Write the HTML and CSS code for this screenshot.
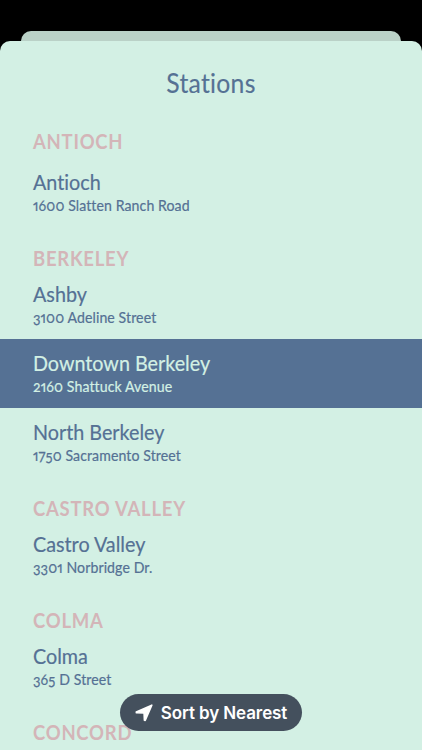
FILE: index.html
```html
<!DOCTYPE html>
<html lang="en">
<head>
  <meta charset="UTF-8" />
  <meta name="viewport" content="width=device-width, initial-scale=1.0"/>
  <title>Stations</title>
  <link rel="stylesheet" href="styles.css">
</head>
<body>

  <div class="back-card"></div>

  <main class="sheet">
    <h1 class="title">Stations</h1>

    <section class="group first">
      <h2>ANTIOCH</h2>
      <div class="station">
        <div class="name">Antioch</div>
        <div class="address">1600 Slatten Ranch Road</div>
      </div>
    </section>

    <section class="group">
      <h2>BERKELEY</h2>
      <div class="station">
        <div class="name">Ashby</div>
        <div class="address">3100 Adeline Street</div>
      </div>
      <div class="station selected">
        <div class="name">Downtown Berkeley</div>
        <div class="address">2160 Shattuck Avenue</div>
      </div>
      <div class="station">
        <div class="name">North Berkeley</div>
        <div class="address">1750 Sacramento Street</div>
      </div>
    </section>

    <section class="group">
      <h2>CASTRO VALLEY</h2>
      <div class="station">
        <div class="name">Castro Valley</div>
        <div class="address">3301 Norbridge Dr.</div>
      </div>
    </section>

    <section class="group">
      <h2>COLMA</h2>
      <div class="station">
        <div class="name">Colma</div>
        <div class="address">365 D Street</div>
      </div>
    </section>

    <section class="group">
      <h2>CONCORD</h2>
    </section>
  </main>

  <button class="sort-button">
    <svg width="18" height="18" viewBox="0 0 18 18"><path d="M16.8 1.2 L10.2 16.5 L9.4 16.3 L9.1 9.4 Q9 9 8.6 9 L1.4 8.8 L1.3 8.1 Z" fill="#fff" stroke="#fff" stroke-width="1.6" stroke-linejoin="round"/></svg>
    <span>Sort by Nearest</span>
  </button>

</body>
</html>
```

FILE: styles.css
```css
* {
  box-sizing: border-box;
}

body {
  margin: 0;
  height: 750px;
  padding-top: 31px;
  background: #000;
  font-family: Lato, "Open Sans", sans-serif;
  font-variant-ligatures: none;
  font-variant-numeric: oldstyle-nums proportional-nums;
  color: #557194;
  overflow: hidden;
}

.back-card {
  height: 10px;
  margin: 0 21px;
  border-radius: 10px 10px 0 0;
  background: #bad1c7;
}

.sheet {
  height: 709px;
  border-radius: 10px 10px 0 0;
  background: #d3f0e4;
  overflow: hidden;
}

.title {
  margin: 25px 0 12px;
  font-size: 26px;
  line-height: 34px;
  font-weight: 400;
  letter-spacing: 0.3px;
  text-align: center;
  transform: scaleX(0.95);
  -webkit-text-stroke: 0.15px;
}

.group h2 {
  margin: 0 33px;
  padding-top: 17px;
  height: 43px;
  font-size: 20px;
  line-height: 28px;
  letter-spacing: 0.8px;
  color: #d3b5b8;
  transform: scaleX(0.925);
  transform-origin: left;
}

.group.first h2 {
  padding-top: 15px;
  height: 46px;
}

.station {
  height: 69px;
  padding: 10px 33px 0;
}

.selected {
  background: #557194;
  color: #d3f0e4;
}

.name,
.address {
  transform: scaleX(0.94);
  transform-origin: left;
  -webkit-text-stroke: 0.2px;
}

.name {
  font-size: 21px;
  line-height: 28px;
}

.address {
  font-size: 15px;
  line-height: 18px;
  letter-spacing: 0.1px;
}

.sort-button {
  position: absolute;
  left: 120px;
  top: 694px;
  width: 182px;
  height: 37px;
  padding: 0;
  border: none;
  border-radius: 19px;
  display: flex;
  align-items: center;
  justify-content: center;
  gap: 8px;
  background: #44505d;
  color: #fff;
  font: 600 17px Inter, sans-serif;
  letter-spacing: -0.1px;
}
```
